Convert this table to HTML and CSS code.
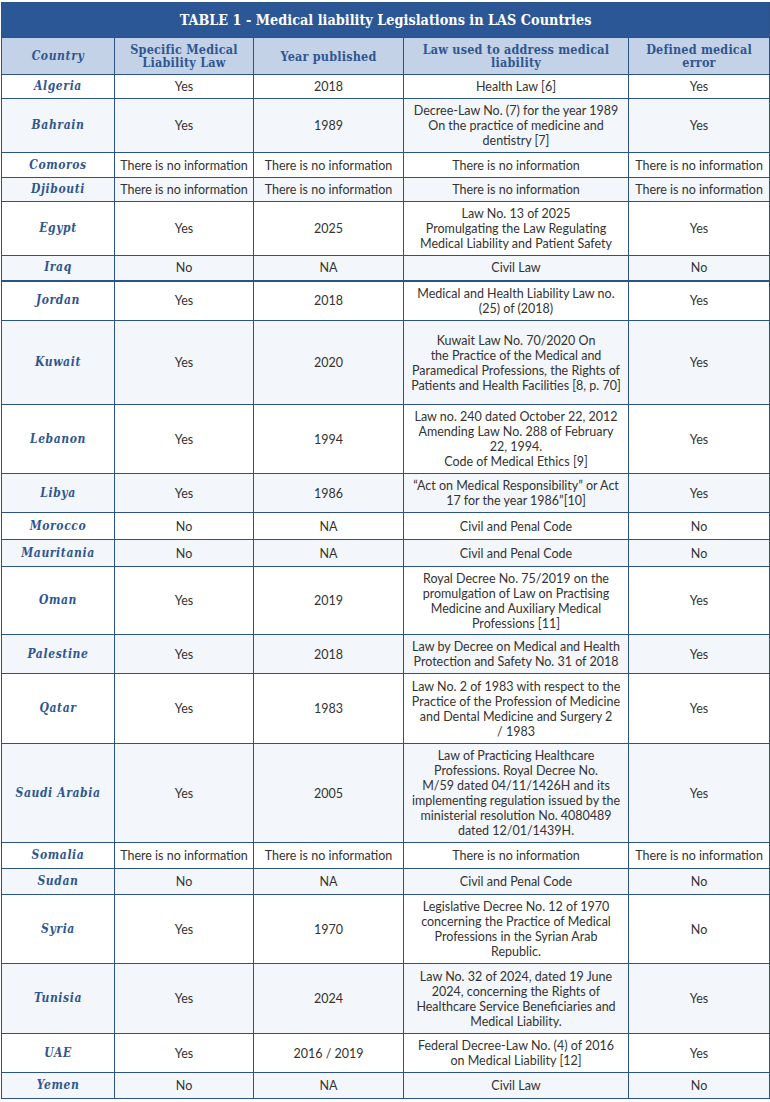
FILE: index.html
```html
<!DOCTYPE html>
<html lang="en">
<head>
<meta charset="utf-8">
<title>TABLE 1 - Medical liability Legislations in LAS Countries</title>
<link rel="stylesheet" href="styles.css">
</head>
<body>
<table class="tbl">
  <colgroup>
    <col class="c-country">
    <col class="c-specific">
    <col class="c-year">
    <col class="c-law">
    <col class="c-error">
  </colgroup>
  <thead>
    <tr class="title-row"><th colspan="5" class="title">TABLE 1 - Medical liability Legislations in LAS Countries</th></tr>
    <tr class="head-row">
      <th class="country-h">Country</th>
      <th>Specific Medical Liability Law</th>
      <th>Year published</th>
      <th>Law used to address medical liability</th>
      <th>Defined medical error</th>
    </tr>
  </thead>
  <tbody>
    <tr class="h24"><th class="country">Algeria</th><td>Yes</td><td>2018</td><td>Health Law [6]</td><td>Yes</td></tr>
    <tr class="alt h54"><th class="country">Bahrain</th><td>Yes</td><td>1989</td><td>Decree-Law No. (7) for the year 1989<br>On the practice of medicine and<br>dentistry [7]</td><td>Yes</td></tr>
    <tr class="h25"><th class="country">Comoros</th><td>There is no information</td><td>There is no information</td><td>There is no information</td><td>There is no information</td></tr>
    <tr class="alt h24"><th class="country">Djibouti</th><td>There is no information</td><td>There is no information</td><td>There is no information</td><td>There is no information</td></tr>
    <tr class="h54"><th class="country">Egypt</th><td>Yes</td><td>2025</td><td>Law No. 13 of 2025<br>Promulgating the Law Regulating<br>Medical Liability and Patient Safety</td><td>Yes</td></tr>
    <tr class="alt h25 thick"><th class="country">Iraq</th><td>No</td><td>NA</td><td>Civil Law</td><td>No</td></tr>
    <tr class="h40"><th class="country">Jordan</th><td>Yes</td><td>2018</td><td>Medical and Health Liability Law no.<br>(25) of (2018)</td><td>Yes</td></tr>
    <tr class="alt h84"><th class="country">Kuwait</th><td>Yes</td><td>2020</td><td>Kuwait Law No. 70/2020 On<br>the Practice of the Medical and<br>Paramedical Professions, the Rights of<br>Patients and Health Facilities [8, p. 70]</td><td>Yes</td></tr>
    <tr class="h69"><th class="country">Lebanon</th><td>Yes</td><td>1994</td><td>Law no. 240 dated October 22, 2012<br>Amending Law No. 288 of February<br>22, 1994.<br>Code of Medical Ethics [9]</td><td>Yes</td></tr>
    <tr class="alt h39"><th class="country">Libya</th><td>Yes</td><td>1986</td><td>“Act on Medical Responsibility” or Act<br>17 for the year 1986”[10]</td><td>Yes</td></tr>
    <tr class="h27"><th class="country">Morocco</th><td>No</td><td>NA</td><td>Civil and Penal Code</td><td>No</td></tr>
    <tr class="alt h27"><th class="country">Mauritania</th><td>No</td><td>NA</td><td>Civil and Penal Code</td><td>No</td></tr>
    <tr class="h68"><th class="country">Oman</th><td>Yes</td><td>2019</td><td>Royal Decree No. 75/2019 on the<br>promulgation of Law on Practising<br>Medicine and Auxiliary Medical<br>Professions [11]</td><td>Yes</td></tr>
    <tr class="alt h39"><th class="country">Palestine</th><td>Yes</td><td>2018</td><td>Law by Decree on Medical and Health<br>Protection and Safety No. 31 of 2018</td><td>Yes</td></tr>
    <tr class="h70"><th class="country">Qatar</th><td>Yes</td><td>1983</td><td>Law No. 2 of 1983 with respect to the<br>Practice of the Profession of Medicine<br>and Dental Medicine and Surgery 2<br>/ 1983</td><td>Yes</td></tr>
    <tr class="alt h99"><th class="country">Saudi Arabia</th><td>Yes</td><td>2005</td><td>Law of Practicing Healthcare<br>Professions. Royal Decree No.<br>M/59 dated 04/11/1426H and its<br>implementing regulation issued by the<br>ministerial resolution No. 4080489<br>dated 12/01/1439H.</td><td>Yes</td></tr>
    <tr class="h26"><th class="country">Somalia</th><td>There is no information</td><td>There is no information</td><td>There is no information</td><td>There is no information</td></tr>
    <tr class="alt h26"><th class="country">Sudan</th><td>No</td><td>NA</td><td>Civil and Penal Code</td><td>No</td></tr>
    <tr class="h69"><th class="country">Syria</th><td>Yes</td><td>1970</td><td>Legislative Decree No. 12 of 1970<br>concerning the Practice of Medical<br>Professions in the Syrian Arab<br>Republic.</td><td>No</td></tr>
    <tr class="alt h70"><th class="country">Tunisia</th><td>Yes</td><td>2024</td><td>Law No. 32 of 2024, dated 19 June<br>2024, concerning the Rights of<br>Healthcare Service Beneficiaries and<br>Medical Liability.</td><td>Yes</td></tr>
    <tr class="h39"><th class="country">UAE</th><td>Yes</td><td>2016 / 2019</td><td>Federal Decree-Law No. (4) of 2016<br>on Medical Liability [12]</td><td>Yes</td></tr>
    <tr class="alt h26"><th class="country">Yemen</th><td>No</td><td>NA</td><td>Civil Law</td><td>No</td></tr>
  </tbody>
</table>
</body>
</html>
```

FILE: styles.css
```css
html, body {
  margin: 0;
  padding: 0;
  background: #ffffff;
}

body {
  padding: 2px 1px 0 1px;
}

.tbl {
  width: 768px;
  border-collapse: collapse;
  table-layout: fixed;
  font-family: Lato, "Open Sans", sans-serif;
  font-size: 12.5px;
  line-height: 15px;
  color: #333333;
}

.c-country { width: 113px; }
.c-specific { width: 139px; }
.c-year { width: 150px; }
.c-law { width: 225px; }
.c-error { width: 141px; }

.tbl td,
.tbl th {
  border: 1px solid #2c5386;
  text-align: center;
  vertical-align: middle;
  padding: 0 3px;
}

.title-row { height: 35px; }

.title {
  background: #2b5796;
  color: #ffffff;
  font-family: "DejaVu Serif", serif;
  font-stretch: condensed;
  font-weight: bold;
  font-size: 14.3px;
  border-color: #2b5796;
}

.head-row { height: 37px; }

.head-row th {
  background: #c3d2e6;
  color: #2f5690;
  font-family: "DejaVu Serif", serif;
  font-stretch: condensed;
  font-weight: bold;
  font-size: 12.5px;
  line-height: 13px;
  letter-spacing: 0.2px;
}

.head-row .country-h {
  font-style: italic;
  font-size: 12px;
  letter-spacing: 0.6px;
}

.country {
  color: #2f5690;
  font-family: "DejaVu Serif", serif;
  font-stretch: condensed;
  font-weight: bold;
  font-style: italic;
  font-size: 12px;
  letter-spacing: 0.6px;
}

.alt { background: #f3f6fa; }

.thick td,
.thick th { border-bottom: 2px solid #2c5386; }

.h24 { height: 24px; }
.h25 { height: 25px; }
.h26 { height: 26px; }
.h27 { height: 27px; }
.h39 { height: 39px; }
.h40 { height: 40px; }
.h54 { height: 54px; }
.h68 { height: 68px; }
.h69 { height: 69px; }
.h70 { height: 70px; }
.h84 { height: 84px; }
.h99 { height: 99px; }
```
